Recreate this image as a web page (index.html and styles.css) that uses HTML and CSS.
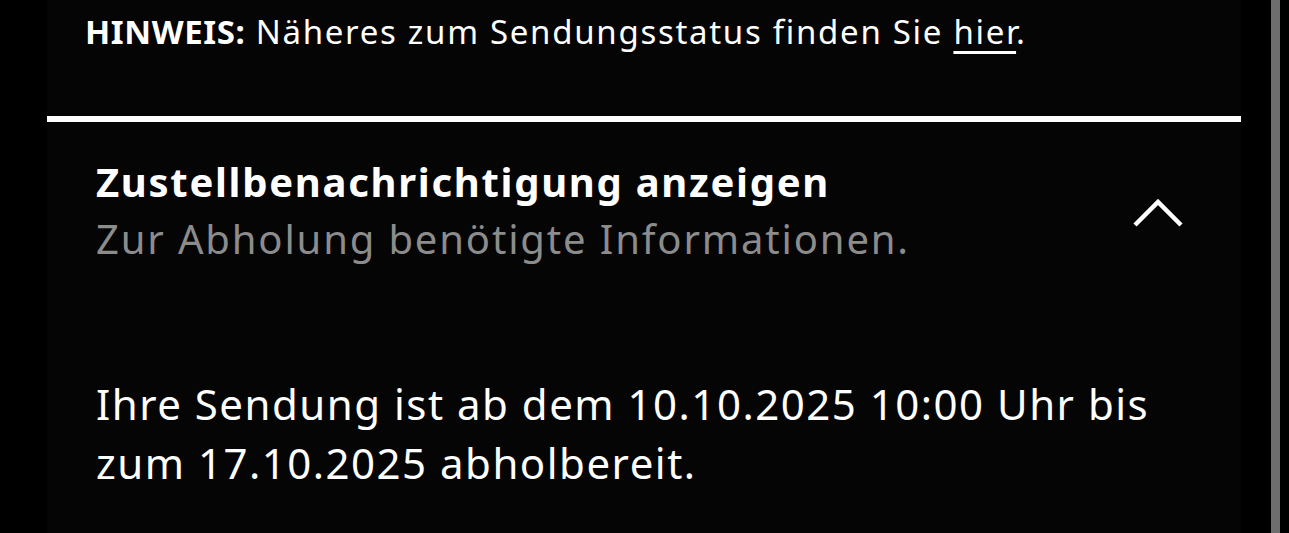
FILE: index.html
```html
<!DOCTYPE html>
<html lang="de">
<head>
    <meta charset="UTF-8">
    <meta name="viewport" content="width=device-width, initial-scale=1.0">
    <title>Sendungsverfolgung</title>
    <link rel="stylesheet" href="styles.css">
</head>
<body>
    <div class="page">
        <div class="panel">
            <p class="note"><strong>HINWEIS:</strong> Näheres zum Sendungsstatus finden Sie <a href="#">hier</a>.</p>
            <div class="accordion">
                <div class="acc-head">
                    <div class="acc-titles">
                        <div class="acc-title">Zustellbenachrichtigung anzeigen</div>
                        <div class="acc-sub">Zur Abholung benötigte Informationen.</div>
                    </div>
                    <svg class="chevron" width="52" height="32" viewBox="0 0 52 32">
                        <polyline points="3,28 26,5 49,28" fill="none" stroke="#fff" stroke-width="4.5"/>
                    </svg>
                </div>
                <p class="acc-body">Ihre Sendung ist ab dem 10.10.2025 10:00 Uhr bis zum 17.10.2025 abholbereit.</p>
            </div>
        </div>
        <div class="scrollbar"></div>
    </div>
</body>
</html>
```

FILE: styles.css
```css
html, body {
    margin: 0;
    height: 100%;
    background: #000;
}
body {
    font-family: "Noto Sans", "Open Sans", sans-serif;
    color: #fff;
    overflow: hidden;
}
.page {
    display: flex;
    height: 100%;
    padding-left: 47px;
}
.panel {
    width: 1194px;
    background: #050505;
}
.scrollbar {
    width: 9px;
    margin-left: 30px;
    background: #6e6e6e;
}
.note {
    margin: 0;
    padding: 9px 0 0 38px;
    height: 107px;
    font-size: 33px;
    line-height: 46px;
    letter-spacing: 1.7px;
    border-bottom: 6px solid #fff;
}
.note strong {
    font-weight: 700;
    letter-spacing: 0.6px;
}
.note a {
    color: #fff;
    text-decoration: underline;
    text-underline-offset: 7px;
    text-decoration-thickness: 3px;
}
.accordion {
    padding: 0 49px;
}
.acc-head {
    display: flex;
    align-items: center;
    justify-content: space-between;
    padding-top: 32px;
    padding-right: 8px;
}
.acc-title {
    font-size: 40px;
    font-weight: 700;
    line-height: 56px;
    letter-spacing: 1.7px;
}
.acc-sub {
    font-size: 40px;
    line-height: 58px;
    letter-spacing: 1.85px;
    color: #8c8c8c;
}
.chevron {
    margin-top: 4px;
}
.acc-body {
    margin: 0;
    padding-top: 106px;
    font-size: 42px;
    line-height: 59px;
    letter-spacing: 1.5px;
    max-width: 1090px;
}
```
